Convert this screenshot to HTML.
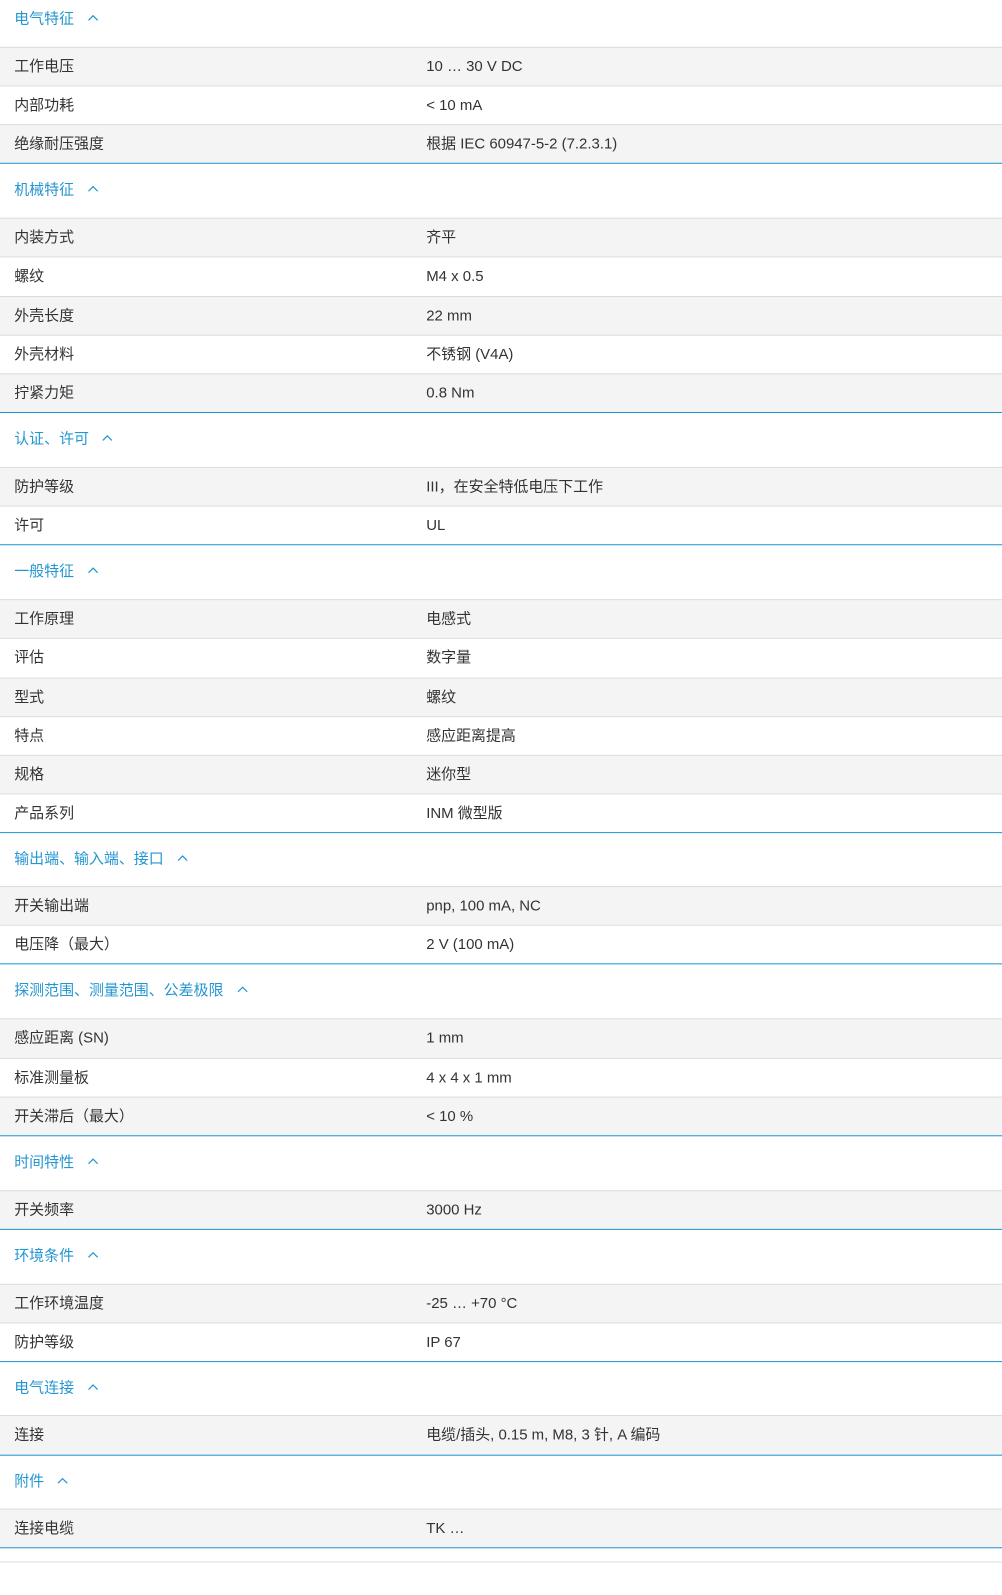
<!DOCTYPE html>
<html><head><meta charset="utf-8"><style>
html,body{margin:0;padding:0;background:#fff;width:1002px;height:1595px;overflow:hidden}
#w{position:absolute;left:0;top:0;width:985px;height:1568px;transform:scale(1.01726);transform-origin:0 0;font-family:"Liberation Sans","Noto Sans CJK SC",sans-serif;font-size:14.7px;color:#333}
.h{position:absolute;left:14px;color:#2496d2;line-height:20px;white-space:nowrap}
.h svg{display:inline-block;vertical-align:middle;margin-left:13px;margin-top:-3px}
.r{position:absolute;left:0;width:985px;border-top:1px solid #dcdcdc;box-sizing:border-box}
.g{background:#f4f4f4}
.r .l,.r .v{position:absolute;top:50%;margin-top:-10px;height:20px;line-height:20px;white-space:nowrap}
.r .l{left:14px}
.r .v{left:419px}
.b{position:absolute;left:0;width:985px;height:1px;background:#1f92cf}
.gl{position:absolute;left:0;width:985px;height:1px;background:#dcdcdc}
</style></head><body><div id="w">

<div class="h" style="top:9px">电气特征<svg width="11" height="7" viewBox="0 0 11 7"><polyline points="1,6 5.5,1.5 10,6" fill="none" stroke="#2496d2" stroke-width="1.2"/></svg></div>
<div class="r g" style="top:46px;height:38px"><span class="l">工作电压</span><span class="v">10 … 30 V DC</span></div>
<div class="r" style="top:84px;height:38px"><span class="l">内部功耗</span><span class="v">&lt; 10 mA</span></div>
<div class="r g" style="top:122px;height:38px"><span class="l">绝缘耐压强度</span><span class="v">根据 IEC 60947-5-2 (7.2.3.1)</span></div>
<div class="b" style="top:160px"></div>

<div class="h" style="top:177px">机械特征<svg width="11" height="7" viewBox="0 0 11 7"><polyline points="1,6 5.5,1.5 10,6" fill="none" stroke="#2496d2" stroke-width="1.2"/></svg></div>
<div class="r g" style="top:214px;height:38px"><span class="l">内装方式</span><span class="v">齐平</span></div>
<div class="r" style="top:252px;height:39px"><span class="l">螺纹</span><span class="v">M4 x 0.5</span></div>
<div class="r g" style="top:291px;height:38px"><span class="l">外壳长度</span><span class="v">22 mm</span></div>
<div class="r" style="top:329px;height:38px"><span class="l">外壳材料</span><span class="v">不锈钢 (V4A)</span></div>
<div class="r g" style="top:367px;height:38px"><span class="l">拧紧力矩</span><span class="v">0.8 Nm</span></div>
<div class="b" style="top:405px"></div>

<div class="h" style="top:422px">认证、许可<svg width="11" height="7" viewBox="0 0 11 7"><polyline points="1,6 5.5,1.5 10,6" fill="none" stroke="#2496d2" stroke-width="1.2"/></svg></div>
<div class="r g" style="top:459px;height:38px"><span class="l">防护等级</span><span class="v">III，在安全特低电压下工作</span></div>
<div class="r" style="top:497px;height:38px"><span class="l">许可</span><span class="v">UL</span></div>
<div class="b" style="top:535px"></div>

<div class="h" style="top:552px">一般特征<svg width="11" height="7" viewBox="0 0 11 7"><polyline points="1,6 5.5,1.5 10,6" fill="none" stroke="#2496d2" stroke-width="1.2"/></svg></div>
<div class="r g" style="top:589px;height:38px"><span class="l">工作原理</span><span class="v">电感式</span></div>
<div class="r" style="top:627px;height:39px"><span class="l">评估</span><span class="v">数字量</span></div>
<div class="r g" style="top:666px;height:38px"><span class="l">型式</span><span class="v">螺纹</span></div>
<div class="r" style="top:704px;height:38px"><span class="l">特点</span><span class="v">感应距离提高</span></div>
<div class="r g" style="top:742px;height:38px"><span class="l">规格</span><span class="v">迷你型</span></div>
<div class="r" style="top:780px;height:38px"><span class="l">产品系列</span><span class="v">INM 微型版</span></div>
<div class="b" style="top:818px"></div>

<div class="h" style="top:835px">输出端、输入端、接口<svg width="11" height="7" viewBox="0 0 11 7"><polyline points="1,6 5.5,1.5 10,6" fill="none" stroke="#2496d2" stroke-width="1.2"/></svg></div>
<div class="r g" style="top:871px;height:38px"><span class="l">开关输出端</span><span class="v">pnp, 100 mA, NC</span></div>
<div class="r" style="top:909px;height:38px"><span class="l">电压降（最大）</span><span class="v">2 V (100 mA)</span></div>
<div class="b" style="top:947px"></div>

<div class="h" style="top:964px">探测范围、测量范围、公差极限<svg width="11" height="7" viewBox="0 0 11 7"><polyline points="1,6 5.5,1.5 10,6" fill="none" stroke="#2496d2" stroke-width="1.2"/></svg></div>
<div class="r g" style="top:1001px;height:39px"><span class="l">感应距离 (SN)</span><span class="v">1 mm</span></div>
<div class="r" style="top:1040px;height:38px"><span class="l">标准测量板</span><span class="v">4 x 4 x 1 mm</span></div>
<div class="r g" style="top:1078px;height:38px"><span class="l">开关滞后（最大）</span><span class="v">&lt; 10 %</span></div>
<div class="b" style="top:1116px"></div>

<div class="h" style="top:1133px">时间特性<svg width="11" height="7" viewBox="0 0 11 7"><polyline points="1,6 5.5,1.5 10,6" fill="none" stroke="#2496d2" stroke-width="1.2"/></svg></div>
<div class="r g" style="top:1170px;height:38px"><span class="l">开关频率</span><span class="v">3000 Hz</span></div>
<div class="b" style="top:1208px"></div>

<div class="h" style="top:1225px">环境条件<svg width="11" height="7" viewBox="0 0 11 7"><polyline points="1,6 5.5,1.5 10,6" fill="none" stroke="#2496d2" stroke-width="1.2"/></svg></div>
<div class="r g" style="top:1262px;height:38px"><span class="l">工作环境温度</span><span class="v">-25 … +70 °C</span></div>
<div class="r" style="top:1300px;height:38px"><span class="l">防护等级</span><span class="v">IP 67</span></div>
<div class="b" style="top:1338px"></div>

<div class="h" style="top:1355px">电气连接<svg width="11" height="7" viewBox="0 0 11 7"><polyline points="1,6 5.5,1.5 10,6" fill="none" stroke="#2496d2" stroke-width="1.2"/></svg></div>
<div class="r g" style="top:1391px;height:39px"><span class="l">连接</span><span class="v">电缆/插头, 0.15 m, M8, 3 针, A 编码</span></div>
<div class="b" style="top:1430px"></div>

<div class="h" style="top:1447px">附件<svg width="11" height="7" viewBox="0 0 11 7"><polyline points="1,6 5.5,1.5 10,6" fill="none" stroke="#2496d2" stroke-width="1.2"/></svg></div>
<div class="r g" style="top:1483px;height:38px"><span class="l">连接电缆</span><span class="v">TK …</span></div>
<div class="b" style="top:1521px"></div>
<div class="gl" style="top:1535px"></div>

</div></body></html>
